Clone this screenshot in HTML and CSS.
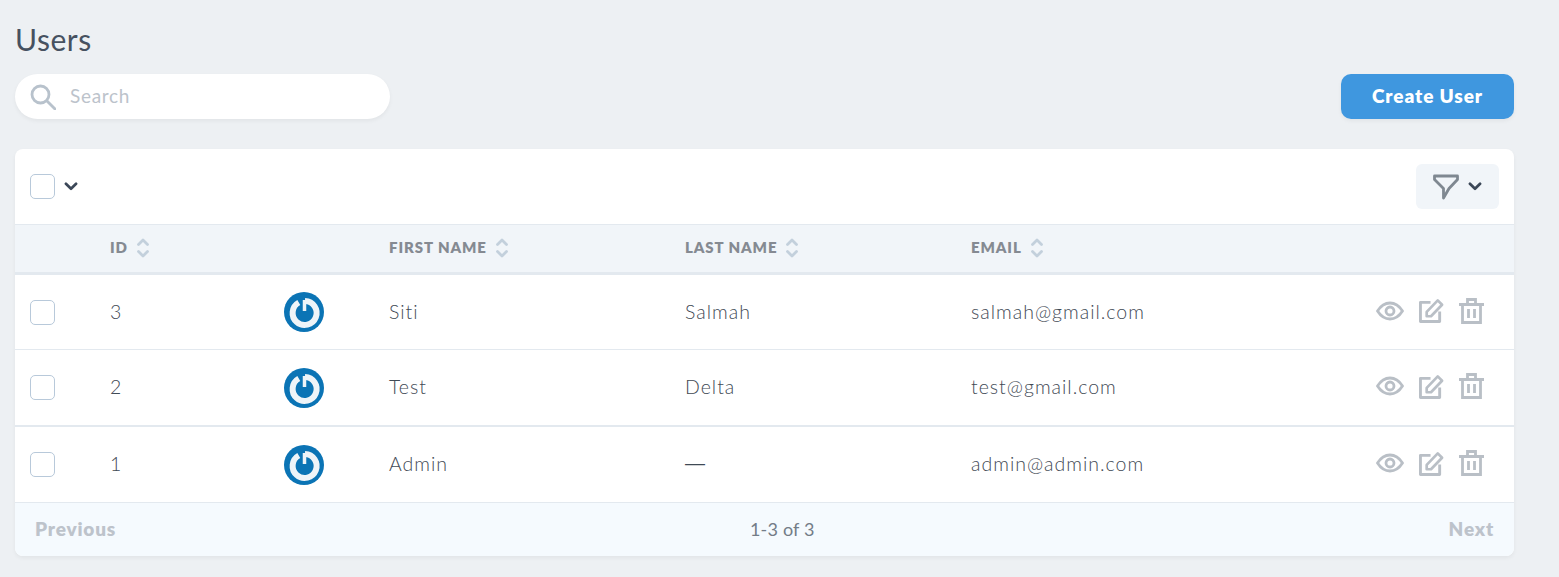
FILE: index.html
```html
<!DOCTYPE html>
<html lang="en">
<head>
<meta charset="utf-8">
<title>Users</title>
<link rel="stylesheet" href="styles.css">
</head>
<body>
<svg class="defs" width="0" height="0" aria-hidden="true">
  <symbol id="chev" viewBox="0 0 12 8"><path d="M1.500 1.500 6 6l4.500-4.500" fill="none" stroke="currentColor" stroke-width="2.400" stroke-linecap="round" stroke-linejoin="round"/></symbol>
  <symbol id="sort" viewBox="0 0 12 20"><path d="M1.500 6.500 6 2l4.500 4.500M1.500 13.500 6 18l4.500-4.500" fill="none" stroke="currentColor" stroke-width="2.800" stroke-linecap="round" stroke-linejoin="round"/></symbol>
  <symbol id="eye" viewBox="0 0 28 20"><path d="M1.500 10C5 4.500 9 2 14 2s9 2.500 12.500 8C23 15.500 19 18 14 18S5 15.500 1.500 10Z" fill="none" stroke="currentColor" stroke-width="2.800" stroke-linejoin="round"/><circle cx="14" cy="10" r="4" fill="none" stroke="currentColor" stroke-width="2.800"/></symbol>
  <symbol id="edit" viewBox="0 0 26 26"><path d="M12 4.500H1.500v20h20V14" fill="none" stroke="currentColor" stroke-width="3" stroke-linejoin="round"/><path d="M8 14.500 19.500 2.500l4.500 4.500L12.500 19H8Z" fill="none" stroke="currentColor" stroke-width="2.800" stroke-linejoin="round"/></symbol>
  <symbol id="trash" viewBox="0 0 25 26"><path d="M0 6.500h25M8.500 6V1.500h8V6M3.500 6.500v18h18v-18M9.500 11v9M15.500 11v9" fill="none" stroke="currentColor" stroke-width="2.800"/></symbol>
  <symbol id="logo" viewBox="0 0 40 40"><circle cx="20" cy="20" r="20" fill="#0b74b5"/><path d="M14.800 10.500A12 12 0 1 0 21 9" fill="none" stroke="#eef4f8" stroke-width="6"/><path d="M20.500 8v11" fill="none" stroke="#eef4f8" stroke-width="3.500"/></symbol>
</svg>
<main class="page">
  <h1 class="title">Users</h1>
  <div class="actions">
    <label class="search">
      <svg class="search-icon" viewBox="0 0 26 26"><circle cx="10.500" cy="10.500" r="8.500" fill="none" stroke="currentColor" stroke-width="2.800"/><path d="m17 17 8 8" fill="none" stroke="currentColor" stroke-width="2.800" stroke-linecap="round"/></svg>
      <input class="search-input" type="text" placeholder="Search">
    </label>
    <button class="create" type="button">Create User</button>
  </div>
  <section class="card">
    <div class="toolbar">
      <div class="select-all">
        <span class="check"></span>
        <svg class="chev"><use href="#chev"/></svg>
      </div>
      <button class="filter" type="button">
        <svg class="funnel" viewBox="0 0 26 26"><path d="M1.500 2h23v3.500L16 14.500 10.500 24v-9.500L1.500 5.500Z" fill="none" stroke="currentColor" stroke-width="2.800" stroke-linejoin="round"/></svg>
        <svg class="chev"><use href="#chev"/></svg>
      </button>
    </div>
    <div class="row head">
      <span></span>
      <span class="th">ID <svg class="sort"><use href="#sort"/></svg></span>
      <span></span>
      <span class="th">FIRST NAME <svg class="sort"><use href="#sort"/></svg></span>
      <span class="th">LAST NAME <svg class="sort"><use href="#sort"/></svg></span>
      <span class="th">EMAIL <svg class="sort"><use href="#sort"/></svg></span>
      <span></span>
    </div>
    <div class="row body row-short">
      <span class="check"></span><span class="cell">3</span><svg class="logo"><use href="#logo"/></svg><span class="cell">Siti</span><span class="cell">Salmah</span><span class="cell">salmah@gmail.com</span>
      <span class="tools"><svg class="eye"><use href="#eye"/></svg><svg class="edit"><use href="#edit"/></svg><svg class="trash"><use href="#trash"/></svg></span>
    </div>
    <div class="row body row-tall">
      <span class="check"></span><span class="cell">2</span><svg class="logo"><use href="#logo"/></svg><span class="cell">Test</span><span class="cell">Delta</span><span class="cell">test@gmail.com</span>
      <span class="tools"><svg class="eye"><use href="#eye"/></svg><svg class="edit"><use href="#edit"/></svg><svg class="trash"><use href="#trash"/></svg></span>
    </div>
    <div class="row body">
      <span class="check"></span><span class="cell">1</span><svg class="logo"><use href="#logo"/></svg><span class="cell">Admin</span><span class="cell dash">—</span><span class="cell">admin@admin.com</span>
      <span class="tools"><svg class="eye"><use href="#eye"/></svg><svg class="edit"><use href="#edit"/></svg><svg class="trash"><use href="#trash"/></svg></span>
    </div>
    <div class="pager">
      <span class="pager-link">Previous</span>
      <span class="pager-count">1-3 of 3</span>
      <span class="pager-link">Next</span>
    </div>
  </section>
</main>
</body>
</html>
```
FILE: styles.css
```css
* { box-sizing: border-box; }
html, body { margin: 0; height: 100%; }
body {
  background: #edf0f3;
  color: #3d4852;
  font-family: Lato, "Noto Sans", sans-serif;
  overflow: hidden;
}
.defs { position: absolute; }
.page { width: 1499px; margin-left: 15px; padding-top: 22px; }
.title {
  margin: 0;
  height: 52px;
  font-size: 30px;
  line-height: 34px;
  font-weight: 400;
  letter-spacing: .55px;
  color: #465160;
}
.actions { display: flex; justify-content: space-between; align-items: center; height: 45px; }
.search {
  display: flex;
  align-items: center;
  width: 375px;
  height: 45px;
  padding-left: 15px;
  background: #fff;
  border-radius: 23px;
  box-shadow: 0 2px 4px rgba(0,0,0,.05);
}
.search-icon { width: 26px; height: 26px; color: #b8c2cc; flex: none; }
.search-input {
  border: 0;
  outline: 0;
  background: none;
  padding: 0 0 2px;
  margin-left: 14px;
  width: 280px;
  font: 400 19px Lato, sans-serif;
  letter-spacing: .7px;
}
.search-input::placeholder { color: #bcc3cb; opacity: 1; }
.create {
  width: 173px;
  height: 45px;
  padding: 0 0 2px;
  border: 0;
  border-radius: 10px;
  background: #3f97df;
  color: #fff;
  font: 800 19px Lato, sans-serif;
  letter-spacing: .9px;
  box-shadow: 0 2px 4px rgba(0,0,0,.05);
}
.card {
  margin-top: 30px;
  background: #fff;
  border-radius: 8px;
  overflow: hidden;
  box-shadow: 0 2px 4px rgba(0,0,0,.05);
}
.toolbar {
  display: flex;
  justify-content: space-between;
  align-items: center;
  height: 76px;
  padding: 0 15px;
  border-bottom: 1px solid #e3e9ef;
}
.select-all { display: flex; align-items: center; gap: 9px; }
.check {
  display: block;
  width: 25px;
  height: 25px;
  background: #fff;
  border: 1px solid #b8c9da;
  border-radius: 5px;
}
.chev { width: 14px; height: 9px; color: #3c4858; flex: none; }
.filter {
  display: flex;
  align-items: center;
  justify-content: center;
  gap: 9px;
  width: 83px;
  height: 45px;
  border: 0;
  border-radius: 6px;
  background: #f1f5f9;
}
.funnel { width: 26px; height: 26px; color: #7f8891; }
.row {
  display: grid;
  grid-template-columns: 80px 174px 105px 296px 286px 1fr auto;
  align-items: center;
  padding-left: 15px;
}
.head {
  height: 50px;
  padding-bottom: 2px;
  background: #f1f5f9;
  border-bottom: 3px solid #e3e9ef;
}
.th {
  display: flex;
  align-items: center;
  gap: 9px;
  padding-bottom: 2px;
  font-size: 15px;
  font-weight: 800;
  letter-spacing: .9px;
  color: #858a92;
}
.sort { width: 12px; height: 20px; margin-top: 2px; color: #c3d0dc; }
.body {
  height: 76px;
  border-bottom: 1px solid #e3e9ef;
  font-size: 19.500px;
  font-weight: 300;
  letter-spacing: 1px;
  color: #3f4a55;
}
.row-short { height: 75px; }
.row-tall { height: 77px; border-bottom-width: 2px; }
.cell { padding-bottom: 2px; }
.dash { font-family: "Liberation Sans", sans-serif; font-size: 20px; letter-spacing: 0; }
.logo { width: 40px; height: 40px; filter: blur(.5px); }
.tools { display: flex; align-items: center; gap: 15px; padding-right: 30px; padding-bottom: 3px; color: #b9bfc6; }
.eye { width: 28px; height: 20px; }
.edit { width: 25px; height: 25px; }
.trash { width: 25px; height: 26px; }
.pager {
  display: flex;
  justify-content: space-between;
  align-items: center;
  height: 53px;
  padding: 0 20px 2px;
  background: #f5fafe;
}
.pager-link { font-size: 19px; font-weight: 800; color: #bdc3cb; letter-spacing: .8px; }
.pager-count { font-size: 18px; font-weight: 400; color: #737c87; letter-spacing: .2px; }
```
